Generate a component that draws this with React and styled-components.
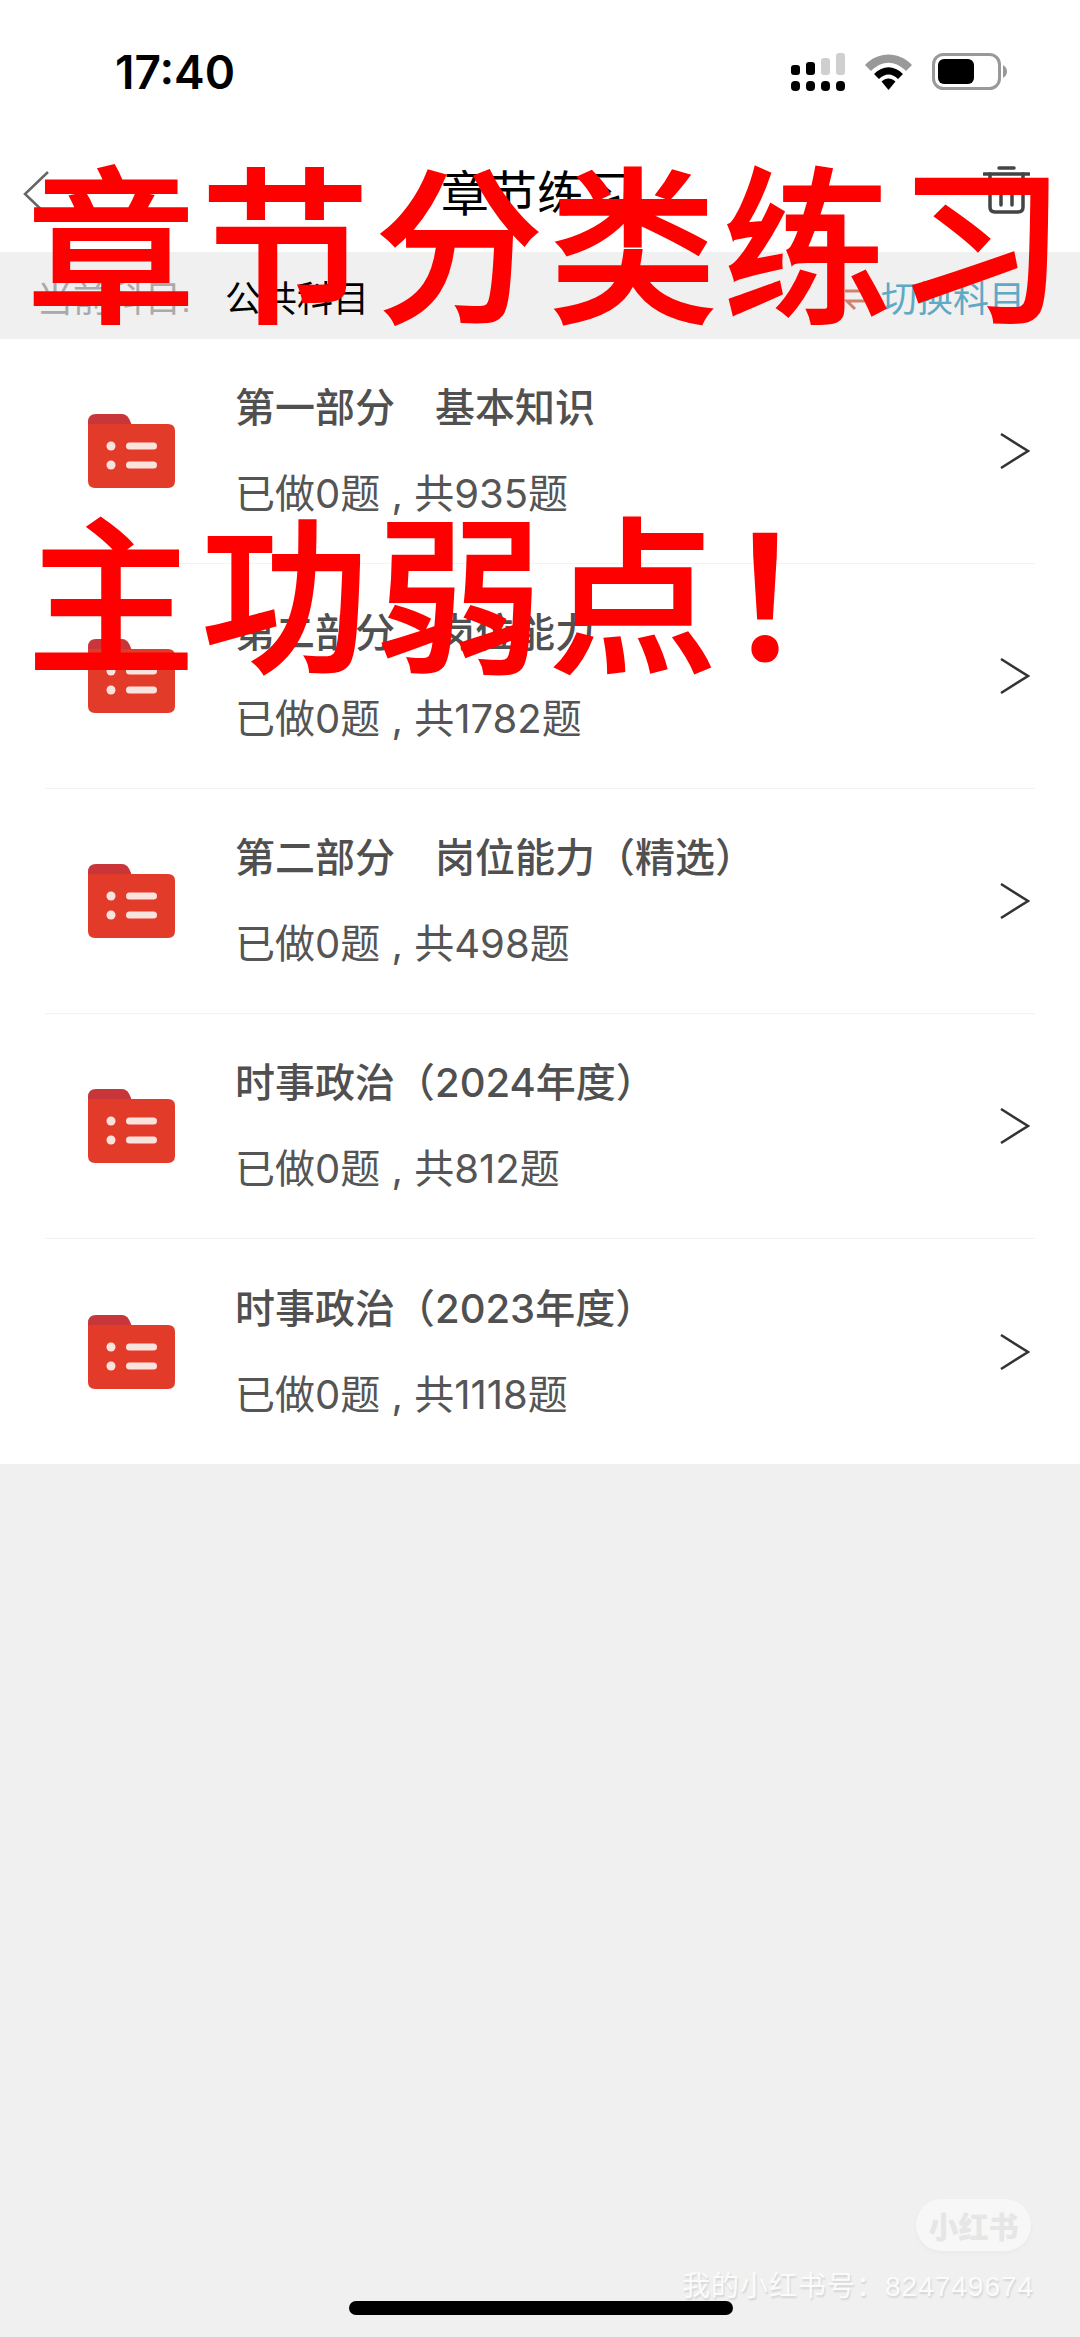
import React from "react";
import styled, { createGlobalStyle } from "styled-components";

const CJK = `"Liberation Sans", "Noto Sans CJK SC", sans-serif`;
const ROW_FONT = `Inter, "Noto Sans CJK SC", sans-serif`;

const Global = createGlobalStyle`
  html, body { margin: 0; padding: 0; background: #f0f0f0; }
  * { box-sizing: border-box; }
`;

const Screen = styled.div`
  position: relative;
  width: 1080px;
  height: 2337px;
  overflow: hidden;
  background: #f0f0f0;
  font-family: ${CJK};
`;

const Top = styled.div`
  background: #fff;
`;

const StatusBar = styled.div`
  height: 144px;
  display: flex;
  align-items: center;
  justify-content: space-between;
  padding: 0 73px 0 115px;
`;

const Time = styled.div`
  font-family: Inter, "Liberation Sans", sans-serif;
  font-size: 46px;
  font-weight: 600;
  color: #000;
`;

const StatusIcons = styled.div`
  display: flex;
  align-items: center;
  gap: 20px;
  margin-top: -1px;
`;

const Nav = styled.div`
  height: 108px;
  padding: 0 50px 16px 22px;
  display: grid;
  grid-template-columns: 1fr auto 1fr;
  align-items: center;
`;

const BackSlot = styled.div`
  padding-top: 8px;
`;

const Title = styled.div`
  font-size: 48px;
  color: #000;
  font-weight: 400;
  margin-left: 22px;
`;

const NavRight = styled.div`
  display: flex;
  justify-content: flex-end;
`;

const SubjectBar = styled.div`
  height: 87px;
  display: flex;
  align-items: center;
  justify-content: space-between;
  padding: 0 55px 0 37px;
  background: #f0f0f0;
  font-size: 36px;
`;

const SubjectGroup = styled.div`
  display: flex;
  align-items: center;
  gap: ${(p) => p.$gap}px;
`;

const SubjectLabel = styled.span`
  color: #aaa;
`;
const SubjectName = styled.span`
  color: #000;
`;
const SwitchLabel = styled.span`
  color: #5ea9c4;
`;

const List = styled.div`
  background: #fff;
`;

const Row = styled.div`
  position: relative;
  height: 225px;
  margin: 0 45px;
  display: grid;
  grid-template-columns: 190px 1fr 30px;
  align-items: center;
  border-bottom: ${(p) => (p.$last ? "none" : "1px solid #f3f3f3")};
  padding-right: 5px;
`;

const FolderCell = styled.div`
  padding-left: 43px;
  display: flex;
`;

const RowText = styled.div`
  display: flex;
  flex-direction: column;
  gap: 38px;
  font-family: ${ROW_FONT};
`;

const RowTitle = styled.div`
  font-size: 40px;
  line-height: 48px;
  font-weight: 500;
  color: #505050;
  white-space: pre;
`;

const RowSub = styled.div`
  font-size: 40px;
  line-height: 48px;
  color: #555;
  white-space: pre;
`;

const Overlay = styled.div`
  position: absolute;
  left: ${(p) => p.$x}px;
  top: ${(p) => p.$y}px;
  font-family: "Noto Sans CJK SC", sans-serif;
  font-size: 168px;
  line-height: 174px;
  font-weight: 500;
  letter-spacing: 6px;
  color: #fe0000;
  -webkit-text-stroke: 2px #fe0000;
  white-space: pre;
`;

const BrandPill = styled.div`
  position: absolute;
  left: 916px;
  top: 2199px;
  width: 115px;
  height: 52px;
  border-radius: 26px;
  background: #f7f7f7;
  box-shadow: 0 2px 5px rgba(0, 0, 0, 0.03);
  display: flex;
  align-items: center;
  justify-content: center;
  font-family: "Noto Sans CJK SC", sans-serif;
  font-size: 30px;
  font-weight: 900;
  color: #e6e6e6;
`;

const Watermark = styled.div`
  position: absolute;
  left: 682px;
  top: 2270px;
  font-size: 28px;
  line-height: 34px;
  color: #fbfbfb;
  text-shadow: 1px 2px 2px rgba(0, 0, 0, 0.12);
  white-space: pre;
  letter-spacing: 1px;
`;

const HomeBar = styled.div`
  position: absolute;
  left: 349px;
  top: 2301px;
  width: 384px;
  height: 14px;
  border-radius: 7px;
  background: #000;
`;

const Signal = () => (
  <svg width="54" height="38" viewBox="0 0 54 38">
    <g fill="#000">
      {[0, 15, 30, 45].map((x) => (
        <rect key={x} x={x} y="28" width="9" height="10" rx="4" />
      ))}
      <rect x="0" y="12" width="9" height="10" rx="3" />
      <rect x="15" y="9" width="9" height="13" rx="3" />
    </g>
    <g fill="#cfcfcf">
      <rect x="30" y="5" width="9" height="17" rx="3" />
      <rect x="45" y="0" width="9" height="22" rx="3" />
    </g>
  </svg>
);

const Wifi = () => (
  <svg width="47" height="36" viewBox="0 0 47 36">
    <path d="M0 11 C13 -3 34 -3 47 11 L41 17 C30 6 17 6 6 17 Z" fill="#999" />
    <path d="M9 20 C18 11 29 11 38 20 L33 25 C27 19 20 19 14 25 Z" fill="#000" />
    <path d="M16.5 27.5 C21 23.5 26 23.5 30.5 27.5 L23.5 36 Z" fill="#000" />
  </svg>
);

const Battery = () => (
  <svg width="75" height="37" viewBox="0 0 75 37">
    <rect x="1.5" y="1.5" width="66" height="34" rx="10" fill="none" stroke="#999" strokeWidth="3" />
    <rect x="6" y="6" width="36" height="25" rx="6" fill="#000" />
    <path d="M71 12 C74 14 75 16 75 18.5 C75 21 74 23 71 25 Z" fill="#999" />
  </svg>
);

const Back = () => (
  <svg width="28" height="48" viewBox="0 0 28 48" style={{ display: "block" }}>
    <path d="M26 2 L3 24 L26 46" fill="none" stroke="#666" strokeWidth="2.5" />
  </svg>
);

const Trash = () => (
  <svg width="47" height="48" viewBox="0 0 47 48">
    <g fill="none" stroke="#444" strokeWidth="3.5" strokeLinecap="round">
      <path d="M16 2 H31" />
      <path d="M1 8 H46" />
      <path d="M7 8 V41 Q7 46 12 46 H35 Q40 46 40 41 V8" />
      <path d="M18 16 V39 M29 16 V39" />
    </g>
  </svg>
);

const Swap = () => (
  <svg width="34" height="30" viewBox="0 0 34 30">
    <g fill="none" stroke="#cf8270" strokeWidth="3">
      <path d="M2 10 H30 L22 2" />
      <path d="M32 20 H4 L12 28" />
    </g>
  </svg>
);

const Folder = () => (
  <svg width="87" height="74" viewBox="0 0 87 74" style={{ display: "block" }}>
    <path d="M0 8 Q0 0 8 0 H34 Q40 0 43 9 L44 12 H0 Z" fill="#c9363a" />
    <path d="M0 10 H80 Q87 10 87 17 V67 Q87 74 80 74 H7 Q0 74 0 67 Z" fill="#e33b2a" />
    <g fill="#fbe3dd">
      <circle cx="23" cy="32" r="4.5" />
      <circle cx="23" cy="51" r="4.5" />
      <rect x="38" y="28.5" width="31" height="7" rx="3.5" />
      <rect x="38" y="47.5" width="31" height="7" rx="3.5" />
    </g>
  </svg>
);

const Chevron = () => (
  <svg width="30" height="36" viewBox="0 0 30 36" style={{ display: "block" }}>
    <path d="M1 1 L28 18 L1 35" fill="none" stroke="#333" strokeWidth="2.5" />
  </svg>
);

const rows = [
  ["第一部分　基本知识", "已做0题 , 共935题"],
  ["第二部分　岗位能力", "已做0题 , 共1782题"],
  ["第二部分　岗位能力（精选）", "已做0题 , 共498题"],
  ["时事政治（2024年度）", "已做0题 , 共812题"],
  ["时事政治（2023年度）", "已做0题 , 共1118题"],
];

export default function App() {
  return (
    <Screen>
      <Global />
      <Top>
        <StatusBar>
          <Time>17:40</Time>
          <StatusIcons>
            <Signal />
            <Wifi />
            <Battery />
          </StatusIcons>
        </StatusBar>
        <Nav>
          <BackSlot>
            <Back />
          </BackSlot>
          <Title>章节练习</Title>
          <NavRight>
            <Trash />
          </NavRight>
        </Nav>
      </Top>
      <SubjectBar>
        <SubjectGroup $gap={34}>
          <SubjectLabel>当前科目:</SubjectLabel>
          <SubjectName>公共科目</SubjectName>
        </SubjectGroup>
        <SubjectGroup $gap={4}>
          <Swap />
          <SwitchLabel>切换科目</SwitchLabel>
        </SubjectGroup>
      </SubjectBar>
      <List>
        {rows.map(([t, s], i) => (
          <Row key={t + s} $last={i === rows.length - 1}>
            <FolderCell>
              <Folder />
            </FolderCell>
            <RowText>
              <RowTitle>{t}</RowTitle>
              <RowSub>{s}</RowSub>
            </RowText>
            <Chevron />
          </Row>
        ))}
      </List>
      <Overlay $x={27} $y={150}>章节分类练习</Overlay>
      <Overlay $x={27} $y={500}>主功弱点！</Overlay>
      <BrandPill>小红书</BrandPill>
      <Watermark>我的小红书号：824749674</Watermark>
      <HomeBar />
    </Screen>
  );
}
